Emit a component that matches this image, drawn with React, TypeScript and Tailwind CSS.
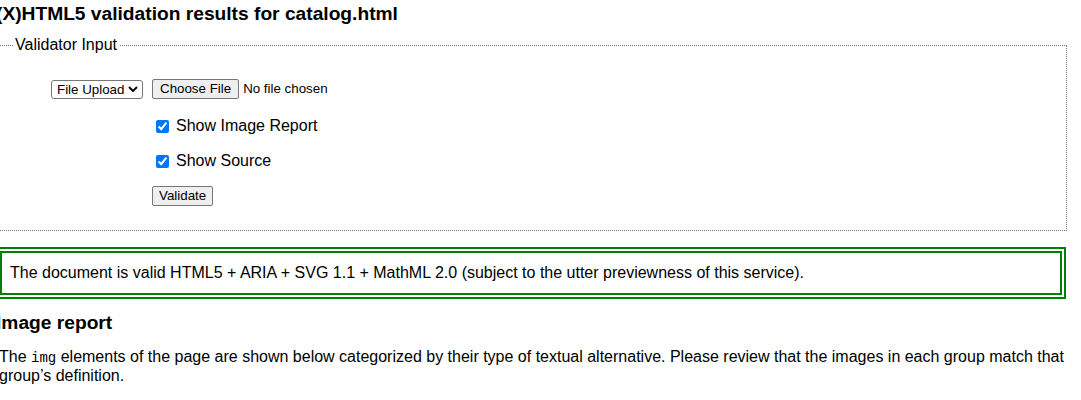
import React from "react";

export default function App() {
  return (
    <div className="min-h-[400px] overflow-hidden bg-white text-[16px] text-black font-['Liberation_Sans',Arial,sans-serif]">
      <div className="-ml-[4px] w-[1071px]">
        <h2 className="pt-[3px] text-[19.2px] font-bold leading-[22px]">
          (X)HTML5 validation results for catalog.html
        </h2>

        <fieldset className="mt-[11px] ml-[2px] w-[1069px] border border-dotted border-[#767676] pl-[14px] pb-[23px]">
          <legend className="px-[2px] leading-[18px]">Validator Input</legend>

          <div className="mt-[24px] flex h-[22px] items-center text-[13.33px]">
            <div className="relative ml-[38px] h-[19px] w-[92px]">
              <select
                defaultValue="upload"
                className="h-[19px] w-[92px] appearance-none rounded-[3px] border border-[#767676] bg-white pl-[5px] text-[13.33px] leading-[17px]"
              >
                <option value="upload">File Upload</option>
                <option value="uri">Address</option>
                <option value="text">Text Field</option>
              </select>
              <svg
                viewBox="0 0 10 6"
                className="pointer-events-none absolute right-[5px] top-[6px] h-[6px] w-[10px]"
              >
                <path d="M1 1 L5 5 L9 1" fill="none" stroke="#000" strokeWidth="1.9" />
              </svg>
            </div>
            <button className="ml-[9px] h-[20px] rounded-[2px] border border-[#767676] bg-[#efefef] px-[7px] leading-[16px]">
              Choose File
            </button>
            <span className="ml-[4px]">No file chosen</span>
          </div>

          <label className="mt-[15px] flex h-[22px] items-center pl-[139px]">
            <input type="checkbox" defaultChecked className="ml-[4px] mr-[7px] h-[13px] w-[13px]" />
            Show Image Report
          </label>

          <label className="mt-[13px] flex h-[22px] items-center pl-[139px]">
            <input type="checkbox" defaultChecked className="ml-[4px] mr-[7px] h-[13px] w-[13px]" />
            Show Source
          </label>

          <div className="mt-[13px] flex h-[22px] items-center pl-[139px]">
            <button className="h-[20px] rounded-[2px] border border-[#767676] bg-[#efefef] px-[6px] text-[13.33px] leading-[16px]">
              Validate
            </button>
          </div>
        </fieldset>

        <div className="mt-[16px] w-[1070px] border-[6px] border-double border-[#008000] p-[8px]">
          The document is valid HTML5 + ARIA + SVG 1.1 + MathML 2.0 (subject to the utter previewness of this
          service).
        </div>

        <h2 className="mt-[13px] text-[19.2px] font-bold leading-[22px]">Image report</h2>

        <p className="mt-[14px] pl-[3px] leading-[18.4px]">
          The <code className="font-['Liberation_Mono',monospace] text-[14px]">img</code> elements of the page are
          shown below categorized by their type of textual alternative. Please review that the images in each group
          match that group’s definition.
        </p>
      </div>
    </div>
  );
}
